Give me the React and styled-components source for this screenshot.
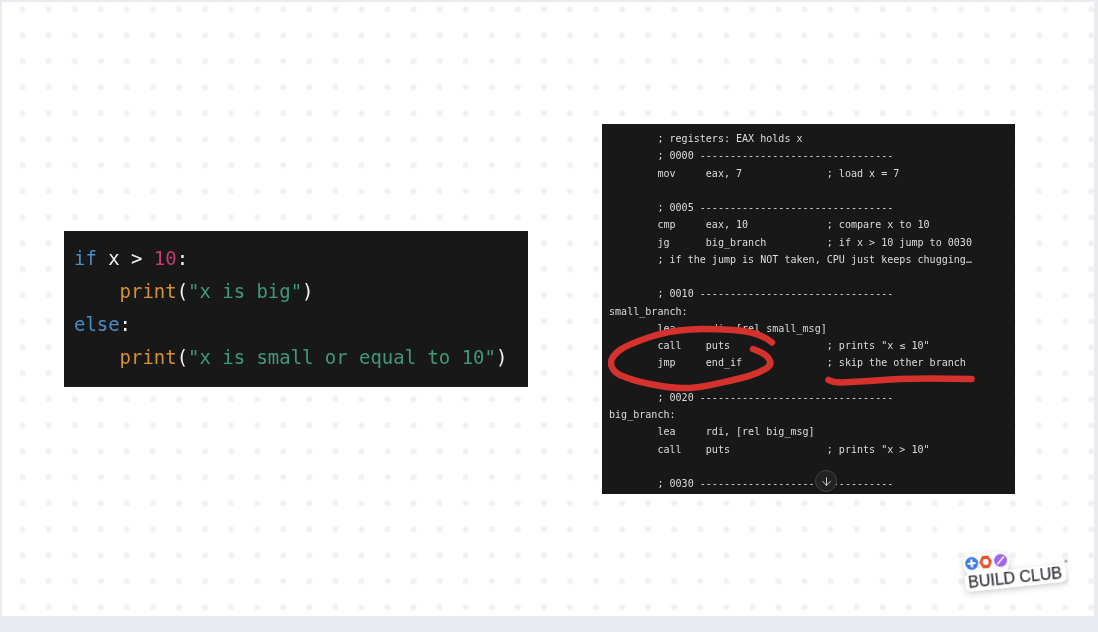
import styled, { createGlobalStyle } from "styled-components";
import { ArrowDown } from "lucide-react";

const GlobalStyle = createGlobalStyle`
html, body {
  margin: 0;
  padding: 0;
  background: #e9ebf1;
}
`;

const Page = styled.div`
  width: 1098px;
  height: 632px;
  padding: 2px 4px 16px 2px;
  box-sizing: border-box;
  overflow: hidden;
`;
const Slide = styled.div`
  position: relative;
  height: 100%;
  display: flex;
  align-items: center;
  gap: 74px;
  padding-left: 62px;
  background-color: #fff;
  background-image: radial-gradient(circle, #f0f0f1 0, #f0f0f1 2px, rgba(240, 240, 241, 0) 4px);
  background-size: 26.07px 26px;
  background-position: 7.6px -5.7px;
`;
const PythonPanel = styled.div`
  width: 464px;
  height: 156px;
  padding: 11px 10px;
  box-sizing: border-box;
  background: #181818;
  font-family: "DejaVu Sans Mono", monospace;
  font-size: 18.95px;
  line-height: 33px;
  color: #f2f2f2;
  white-space: pre;
  filter: blur(0.3px);
`;
const Line = styled.div``;
const Token = styled.span`
  color: ${props => props.color};
`;
const AsmPanel = styled.div`
  position: relative;
  width: 413px;
  height: 370px;
  padding: 6px 7px;
  box-sizing: border-box;
  overflow: hidden;
  background: #181818;
`;
const AsmCode = styled.div`
  font-family: "DejaVu Sans Mono", monospace;
  font-size: 10.05px;
  line-height: 17.25px;
  color: #dcdcdc;
  white-space: pre;
  filter: blur(0.3px);
`;
const AsmLine = styled.div`
  height: 17.25px;
`;
const Scribble = styled.svg`
  position: absolute;
  inset: 0;
  width: 413px;
  height: 370px;
  fill: none;
  stroke: #d5322d;
  stroke-width: 6.5;
  stroke-linecap: round;
  stroke-linejoin: round;
`;
const ScrollButton = styled.div`
  position: absolute;
  left: 213px;
  top: 346px;
  width: 22px;
  height: 22px;
  box-sizing: border-box;
  border-radius: 50%;
  display: flex;
  align-items: center;
  justify-content: center;
  background: #222;
  border: 1px solid #444;
  color: #e6e6e6;
`;
const Logo = styled.div`
  position: absolute;
  left: 962px;
  top: 548px;
  display: flex;
  flex-direction: column;
  align-items: flex-start;
  transform: rotate(-6deg);
  filter: drop-shadow(0 2px 3px rgba(0, 0, 0, 0.2));
`;
const LogoIcons = styled.svg`
  display: block;
  width: 46px;
  height: 21px;
  margin-bottom: -2px;
`;
const LogoWord = styled.div`
  padding: 1px 4px 1px 3px;
  border-radius: 5px;
  background: #fff;
  font-family: "Liberation Sans", Arial, sans-serif;
  font-size: 16px;
  line-height: 16px;
  color: #33363d;
  white-space: nowrap;
  -webkit-text-stroke: 0.25px #33363d;
`;
const Registered = styled.span`
  position: absolute;
  right: -3px;
  top: 15px;
  width: 3px;
  height: 3px;
  border-radius: 50%;
  background: #999;
`;

const asmLines = [
  "        ; registers: EAX holds x",
  "        ; 0000 --------------------------------",
  "        mov     eax, 7              ; load x = 7",
  "",
  "        ; 0005 --------------------------------",
  "        cmp     eax, 10             ; compare x to 10",
  "        jg      big_branch          ; if x > 10 jump to 0030",
  "        ; if the jump is NOT taken, CPU just keeps chugging…",
  "",
  "        ; 0010 --------------------------------",
  "small_branch:",
  "        lea     rdi, [rel small_msg]",
  "        call    puts                ; prints \"x ≤ 10\"",
  "        jmp     end_if              ; skip the other branch",
  "",
  "        ; 0020 --------------------------------",
  "big_branch:",
  "        lea     rdi, [rel big_msg]",
  "        call    puts                ; prints \"x > 10\"",
  "",
  "        ; 0030 --------------------------------",
];

const BLUE = "#4a8ec6";
const PINK = "#c93a70";
const ORANGE = "#d69032";
const GREEN = "#3f9a78";

const App = () => {
  return (
    <Page>
      <GlobalStyle />
      <Slide>
        <PythonPanel>
          <Line><Token color={BLUE}>if</Token> x &gt; <Token color={PINK}>10</Token>:</Line>
          <Line>    <Token color={ORANGE}>print</Token>(<Token color={GREEN}>"x is big"</Token>)</Line>
          <Line><Token color={BLUE}>else</Token>:</Line>
          <Line>    <Token color={ORANGE}>print</Token>(<Token color={GREEN}>"x is small or equal to 10"</Token>)</Line>
        </PythonPanel>
        <AsmPanel>
          <AsmCode>
            {asmLines.map((text, i) => (
              <AsmLine key={i}>{text}</AsmLine>
            ))}
          </AsmCode>
          <Scribble viewBox="0 0 413 370">
            <path d="M170 218.5C160 210 148 207 131 206C112 205 98 204.5 88 205.5C74 206.5 60 209 48 213C36 217 25 221 18 226C11 231 9 235 9 239C9 244 12 248 18 251C27 255 37 258 48 260C62 263 76 264.5 88 264C104 263 118 259 131 256C145 253 157 249 165 244C169 241 169 238 167 235C164 230 157 227 151 225" />
            <path d="M226.5 256C230 258 234 258.5 238 258.5C258 258 278 256 298 255C322 254 346 254.5 369.5 255" />
          </Scribble>
          <ScrollButton>
            <ArrowDown size={13} strokeWidth={1.6} />
          </ScrollButton>
        </AsmPanel>
        <Logo>
          <LogoIcons viewBox="0 0 46 21">
            <rect x="0" y="0" width="46" height="21" rx="9" fill="#fff" />
            <circle cx="8.5" cy="9" r="6.5" fill="#3b7de8" />
            <path d="M8.5 5v8M4.5 9h8" stroke="#fff" strokeWidth="2.2" />
            <path d="M16 9l3.4-6.3h6.2L29 9l-3.4 6.3h-6.2z" fill="#e5532d" />
            <circle cx="22.5" cy="9" r="3" fill="#fff" />
            <circle cx="37.5" cy="9" r="6.5" fill="#a165ec" />
            <path d="M34 12.5l7-7" stroke="#fff" strokeWidth="1.6" />
          </LogoIcons>
          <LogoWord>BUILD CLUB</LogoWord>
          <Registered />
        </Logo>
      </Slide>
    </Page>
  );
};

export default App;
